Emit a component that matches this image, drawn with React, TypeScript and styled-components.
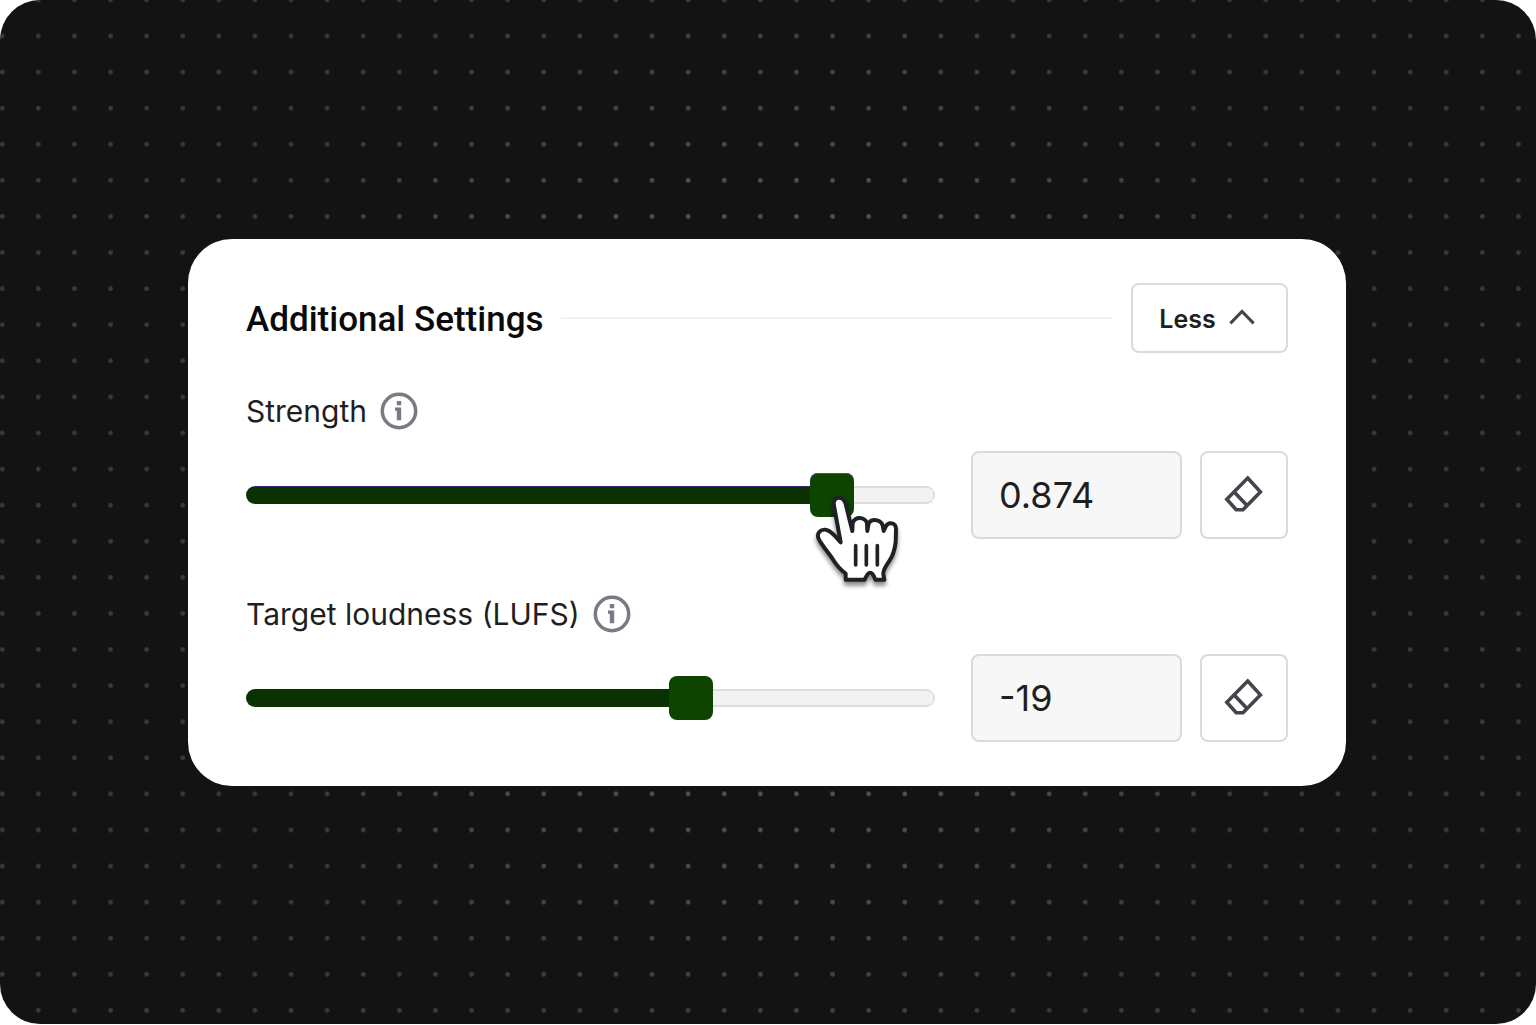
import React, { useState } from "react";
import styled, { createGlobalStyle } from "styled-components";

const THUMB = 44;

const GlobalStyle = createGlobalStyle`
  *, *::before, *::after { box-sizing: border-box; }
  body {
    margin: 0;
    background: #ffffff;
    font-family: Inter, "Liberation Sans", sans-serif;
    color: #1f1f1f;
  }
`;

const Stage = styled.main`
  display: grid;
  grid-template-columns: minmax(0, 1fr);
  min-height: calc(100vh - 1px);
  border-radius: 40px;
  background: #131313;
  overflow: hidden;
`;

const Dots = styled.svg`
  grid-area: 1 / 1;
  width: 100%;
  height: 0;
  min-height: 100%;
`;

const Content = styled.div`
  grid-area: 1 / 1;
  display: flex;
  align-items: center;
  justify-content: center;
  padding: 48px 190px 48px 188px;
  z-index: 1;

  @media (max-width: 1100px) {
    padding: 48px 24px;
  }
`;

const Card = styled.section`
  flex: 1;
  max-width: 1200px;
  padding: 44px 58px;
  border-radius: 44px;
  background: #ffffff;
`;

const Header = styled.header`
  display: flex;
  align-items: center;
  gap: 18px;
  margin-bottom: 39px;
`;

const Title = styled.h2`
  margin: 0;
  padding-top: 4px;
  font-family: Roboto, "Liberation Sans", sans-serif;
  font-size: 35px;
  font-weight: 500;
  line-height: 44px;
  color: #0a0a0a;
`;

const Rule = styled.hr`
  flex: 1;
  height: 2px;
  margin: 0;
  border: 0;
  background: #f2f2f2;
`;

const OutlineButton = styled.button`
  display: flex;
  align-items: center;
  justify-content: center;
  border: 2px solid #dadada;
  border-radius: 8px;
  background: #ffffff;
  color: #45444d;
  cursor: pointer;
  padding: 0;
`;

const ToggleButton = styled(OutlineButton)`
  gap: 12px;
  width: 157px;
  height: 70px;
  padding: 2px 4px 0 0;
  font-family: inherit;
  font-size: 25px;
  font-weight: 600;
  line-height: 32px;
`;

const ToggleText = styled.span`
  color: #1f1f1f;
`;

const IconButton = styled(OutlineButton)`
  flex: none;
  width: 88px;
  height: 88px;
`;

const Settings = styled.div`
  display: flex;
  flex-direction: column;
  gap: 56px;
`;

const LabelRow = styled.div`
  display: flex;
  align-items: center;
  gap: 13px;
  height: 38px;
  margin-bottom: 21px;
`;

const Label = styled.label`
  font-size: 30px;
  line-height: 38px;
`;

const InfoButton = styled.button`
  display: flex;
  padding: 0;
  border: 0;
  background: none;
  color: #7b7983;
  cursor: pointer;
`;

const ControlRow = styled.div`
  display: flex;
  align-items: center;
  gap: 18px;
`;

const SliderBox = styled.div`
  position: relative;
  display: flex;
  flex: 1;
  min-width: 0;
  margin-right: 18px;
`;

const Slider = styled.input<{ $active: boolean }>`
  appearance: none;
  width: 100%;
  height: ${THUMB}px;
  margin: 0;
  background: none;
  outline: none;

  &::-webkit-slider-runnable-track {
    height: 18px;
    border: solid transparent;
    border-width: 2px 0;
    border-radius: 9px;
    background:
      linear-gradient(${(p) => (p.$active ? "#39237a 1px," : "")} #093200 1px, #093200) 0 0 / var(--fill) 100% no-repeat border-box,
      linear-gradient(#f2f2f2, #f2f2f2) 0 0 / calc(100% - 2px) 100% no-repeat padding-box,
      linear-gradient(#dcdcdc, #dcdcdc) border-box;
  }

  &::-webkit-slider-thumb {
    appearance: none;
    width: ${THUMB}px;
    height: ${THUMB}px;
    margin-top: -15px;
    border: 0;
    border-radius: 8px;
    background: #0d4400;
    box-shadow: ${(p) => (p.$active ? "inset 0 1px 0 #5a3cb4" : "none")};
  }
`;

const Pointer = styled.svg`
  position: absolute;
  top: 21px;
  width: 84px;
  height: 96px;
  overflow: visible;
  pointer-events: none;
  filter: drop-shadow(0 4px 2px rgba(0, 0, 0, 0.45));
`;

const ValueInput = styled.input`
  flex: none;
  width: 211px;
  height: 88px;
  padding: 0 26px;
  border: 2px solid #dadada;
  border-radius: 8px;
  background: #f7f7f7;
  color: #1f1f1f;
  font-family: inherit;
  font-size: 36px;
  line-height: 44px;
  outline: none;
`;

function DotGrid() {
  return (
    <Dots viewBox="0 0 1536 1024" preserveAspectRatio="xMidYMid slice" aria-hidden="true">
      <defs>
        <radialGradient id="glow" gradientUnits="userSpaceOnUse" cx="768" cy="512" r="760">
          <stop offset="0" stopColor="#606060" />
          <stop offset="0.4" stopColor="#525252" />
          <stop offset="0.75" stopColor="#3a3a3a" />
          <stop offset="1" stopColor="#3a3a3a" />
        </radialGradient>
        <pattern id="dots" patternUnits="userSpaceOnUse" x="-15.8" y="-18.1" width="36.1" height="36.09">
          <circle cx="18.05" cy="18.05" r="2.4" fill="#fff" />
        </pattern>
        <mask id="dotMask">
          <rect width="1536" height="1024" fill="url(#dots)" />
        </mask>
      </defs>
      <rect width="1536" height="1024" fill="url(#glow)" mask="url(#dotMask)" />
    </Dots>
  );
}

function InfoIcon() {
  return (
    <svg width="38" height="38" viewBox="0 0 38 38" aria-hidden="true">
      <circle cx="19" cy="19" r="16.7" fill="none" stroke="currentColor" strokeWidth="3.5" />
      <path d="M16.8 9h4.4v4.2h-4.4zM15 15.6h6.2v12.6h-4.4v-9.4H15z" fill="currentColor" />
    </svg>
  );
}

function ChevronUp() {
  return (
    <svg width="28" height="28" viewBox="0 0 28 28" aria-hidden="true">
      <path d="M2.4 18.4 14 6.4l11.6 12" fill="none" stroke="currentColor" strokeWidth="3" />
    </svg>
  );
}

function EraserIcon() {
  return (
    <svg width="40" height="40" viewBox="0 0 40 40" aria-hidden="true">
      <path
        d="M23.7 3 36.4 16.9 19 34.7h-6.8L2.8 24.3zM10.2 17 23 30.6"
        fill="none"
        stroke="currentColor"
        strokeWidth="3.6"
      />
    </svg>
  );
}

function HandPointer({ ratio }: { ratio: number }) {
  return (
    <Pointer
      viewBox="78 102 252 288"
      style={{ left: `calc((100% - ${THUMB}px) * ${ratio} + 6px)` }}
      aria-hidden="true"
    >
      <path
        d="M152 247 132 137C129 122 136 113 147 113C158 113 164 120 167 132L187 213L188 188C193 178 200 174 208 174C220 174 229 181 231 190L232 213L236 190C240 183 246 180 253 180C265 180 275 187 278 196L281 213L287 200C291 192 297 189 304 190C314 191 319 199 318 210L317 246C314 272 308 289 297 304C284 322 279 333 280 343L283 359L256 359C252 347 247 338 240 338C233 338 229 348 224 359L167 359L167 341C149 328 137 312 126 294C113 276 102 262 92 247C83 235 81 225 87 217C93 209 105 207 115 212C130 219 139 234 152 247Z"
        fill="#fff"
        stroke="#202124"
        strokeWidth="12"
        strokeLinejoin="round"
      />
      <path d="M197 257v58M229 257v58M262 257v58" stroke="#202124" strokeWidth="11" strokeLinecap="round" />
    </Pointer>
  );
}

interface SettingProps {
  id: string;
  label: string;
  min: number;
  max: number;
  step: number;
  initial: number;
  active?: boolean;
}

function Setting({ id, label, min, max, step, initial, active = false }: SettingProps) {
  const [value, setValue] = useState(String(initial));
  const ratio = Math.min(1, Math.max(0, (Number(value) - min) / (max - min) || 0));
  const fill = { "--fill": `${ratio * 100}%` } as React.CSSProperties;

  return (
    <div>
      <LabelRow>
        <Label htmlFor={id}>{label}</Label>
        <InfoButton type="button" aria-label={`About ${label}`}>
          <InfoIcon />
        </InfoButton>
      </LabelRow>
      <ControlRow>
        <SliderBox>
          <Slider
            id={id}
            type="range"
            min={min}
            max={max}
            step={step}
            value={value}
            onChange={(e) => setValue(e.target.value)}
            $active={active}
            style={fill}
          />
          {active && <HandPointer ratio={ratio} />}
        </SliderBox>
        <ValueInput
          type="text"
          inputMode="decimal"
          aria-label={`${label} value`}
          value={value}
          onChange={(e) => setValue(e.target.value)}
        />
        <IconButton type="button" aria-label={`Reset ${label}`} onClick={() => setValue(String(initial))}>
          <EraserIcon />
        </IconButton>
      </ControlRow>
    </div>
  );
}

export default function App() {
  return (
    <>
      <GlobalStyle />
      <Stage>
        <DotGrid />
        <Content>
          <Card aria-labelledby="settings-title">
            <Header>
              <Title id="settings-title">Additional Settings</Title>
              <Rule />
              <ToggleButton type="button" aria-expanded="true">
                <ToggleText>Less</ToggleText>
                <ChevronUp />
              </ToggleButton>
            </Header>
            <Settings>
              <Setting id="strength" label="Strength" min={0} max={1} step={0.001} initial={0.874} active />
              <Setting id="loudness" label="Target loudness (LUFS)" min={-40} max={-8} step={1} initial={-19} />
            </Settings>
          </Card>
        </Content>
      </Stage>
    </>
  );
}
